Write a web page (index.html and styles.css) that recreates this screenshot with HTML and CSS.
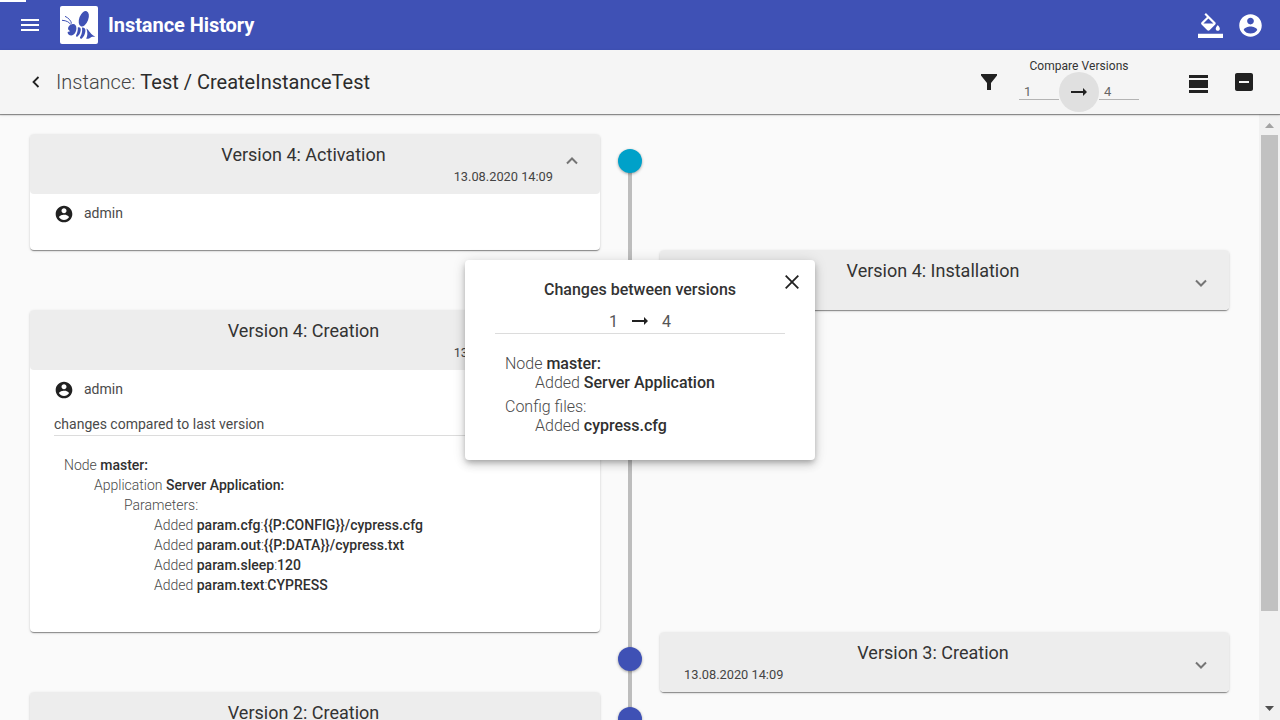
FILE: index.html
```html
<!DOCTYPE html>
<html lang="en">
<head>
<meta charset="utf-8">
<title>Instance History</title>
<link rel="stylesheet" href="styles.css">
</head>
<body>
<svg width="0" height="0" class="defs">
  <symbol id="account" viewBox="0 0 24 24"><path d="M12 2C6.480 2 2 6.480 2 12s4.480 10 10 10 10-4.480 10-10S17.520 2 12 2zm0 3c1.660 0 3 1.340 3 3s-1.340 3-3 3-3-1.340-3-3 1.340-3 3-3zm0 14.200c-2.500 0-4.710-1.280-6-3.220.030-1.990 4-3.080 6-3.080 1.990 0 5.970 1.090 6 3.080-1.290 1.940-3.500 3.220-6 3.220z"/></symbol>
  <symbol id="arrow" viewBox="0 0 24 24"><path d="M16.010 11H4v2h12.010v3L20 12l-3.990-4v3z"/></symbol>
  <symbol id="chevron" viewBox="0 0 16 10"><path d="M3 2.500l5 5 5-5" fill="none" stroke="#757575" stroke-width="2"/></symbol>
</svg>
<div class="app">
  <header class="topbar">
    <div class="progress"></div>
    <svg class="menu" viewBox="0 0 24 24"><path d="M3 18h18v-2H3v2zm0-5h18v-2H3v2zm0-7v2h18V6H3z"/></svg>
    <div class="logo">
      <svg viewBox="0 0 38 38">
        <ellipse cx="23.800" cy="12.700" rx="4.500" ry="8.100" transform="rotate(21 23.800 12.700)"/>
        <path d="M12 18.300c2.600-.8 4.500 1.200 4.400 4 0 3.600-2.200 7.300-5.200 7.200-2.200 0-3.600-1.500-3.600-3.500l2.500-.8-1.900-1.600c-.6-2.500 1.200-4.700 3.800-5.300z"/>
        <path d="M17.800 21.400c2.200-.4 3.300.8 2.900 3.200-.5 2.800-1.500 4.900-3.700 6.300-1.300-.4-1.100-1.600-.5-2.700 1-2.100 1.500-4.200 1.300-6.800z"/>
        <path d="M22 21.600c2.600-.1 3.700 1.200 3.400 3.700-.4 2.800-1.300 5.500-3.800 7.400-1.700.1-2.100-.9-1.200-2.200 1.600-2.500 2-5.400 1.600-8.900z"/>
        <path d="M26.400 22.600c3 1.900 4 6.200 8.900 8-2.400.4-3.700.2-4.600.8-1 .8-2 1.500-4.500 1.400 1.600-3 1.500-6.400.2-10.200z"/>
        <path d="M10.700 18.500C9.600 16.500 6.700 14.500 2 14.300M11.500 17.500C11 14.500 8.500 12 5 10.300" class="antenna"/>
      </svg>
    </div>
    <h1>Instance History</h1>
    <div class="top-actions">
      <svg class="fill" viewBox="0 0 24 24"><path d="M16.560 8.940L7.620 0 6.210 1.410l2.380 2.380-5.150 5.150c-.59.59-.59 1.540 0 2.120l5.500 5.500c.29.290.68.440 1.060.440s.77-.150 1.060-.440l5.500-5.500c.59-.58.59-1.530 0-2.120zM5.210 10L10 5.210 14.790 10H5.210zM19 11.500s-2 2.170-2 3.500c0 1.100.9 2 2 2s2-.9 2-2c0-1.330-2-3.500-2-3.500zM0 20h24v4H0z"/></svg>
      <svg class="user"><use href="#account"/></svg>
    </div>
  </header>
  <div class="toolbar">
    <svg class="back" viewBox="0 0 12 14"><path d="M8.500 2L3.500 7l5 5" fill="none" stroke="#212121" stroke-width="1.800"/></svg>
    <h2>Instance: <span>Test / CreateInstanceTest</span></h2>
    <svg class="filter" viewBox="0 0 16 16"><path d="M0 0h16v1.500L10 9v7H6V9L0 1.500z"/></svg>
    <div class="compare">
      <div class="compare-title">Compare Versions</div>
      <div class="compare-row">
        <div class="field">1</div>
        <div class="go"><svg><use href="#arrow"/></svg></div>
        <div class="field">4</div>
      </div>
    </div>
    <svg class="headline" viewBox="0 0 19 18"><path d="M0 0h19v3H0zM0 5h19v8H0zM0 15h19v3H0z"/></svg>
    <svg class="collapse" viewBox="0 0 18 18"><path d="M16 0H2C.9 0 0 .9 0 2v14c0 1.100.9 2 2 2h14c1.100 0 2-.9 2-2V2c0-1.100-.9-2-2-2zm-2 10H4V8h10v2z"/></svg>
  </div>
  <main class="content">
    <div class="timeline">
      <article class="card left r1">
        <div class="head"><div class="head-text"><h3>Version 4: Activation</h3><time>13.08.2020 14:09</time></div><svg class="chev up"><use href="#chevron"/></svg></div>
        <div class="body"><div class="person"><svg><use href="#account"/></svg><span>admin</span></div></div>
      </article>
      <article class="card right r2">
        <div class="head"><div class="head-text"><h3>Version 4: Installation</h3><time>13.08.2020 14:09</time></div><svg class="chev"><use href="#chevron"/></svg></div>
      </article>
      <article class="card left r3">
        <div class="head"><div class="head-text"><h3>Version 4: Creation</h3><time>13.08.2020 14:09</time></div><svg class="chev up"><use href="#chevron"/></svg></div>
        <div class="body">
          <div class="person"><svg><use href="#account"/></svg><span>admin</span></div>
          <div class="changes-title">changes compared to last version</div>
          <div class="changes">
            <div>Node <b>master:</b></div>
            <div class="in1">Application <b>Server Application:</b></div>
            <div class="in2">Parameters:</div>
            <div class="in3">Added <b>param.cfg</b>:<b>{{P:CONFIG}}/cypress.cfg</b></div>
            <div class="in3">Added <b>param.out</b>:<b>{{P:DATA}}/cypress.txt</b></div>
            <div class="in3">Added <b>param.sleep</b>:<b>120</b></div>
            <div class="in3">Added <b>param.text</b>:<b>CYPRESS</b></div>
          </div>
        </div>
      </article>
      <article class="card right r4">
        <div class="head"><div class="head-text"><h3>Version 3: Creation</h3><time>13.08.2020 14:09</time></div><svg class="chev"><use href="#chevron"/></svg></div>
      </article>
      <article class="card left r5">
        <div class="head"><div class="head-text"><h3>Version 2: Creation</h3></div></div>
      </article>
      <div class="line"></div>
      <div class="dot active r1"></div>
      <div class="dot r2"></div>
      <div class="dot r3"></div>
      <div class="dot r4"></div>
      <div class="dot r5"></div>
    </div>
    <div class="scrollbar">
      <svg viewBox="0 0 9 5"><path d="M0 5h9L4.500 0z" fill="#a3a3a3"/></svg>
      <div class="thumb"></div>
      <svg viewBox="0 0 9 5"><path d="M0 0h9L4.500 5z" fill="#505050"/></svg>
    </div>
  </main>
  <section class="dialog">
    <svg class="close" viewBox="0 0 14 14"><path d="M.7.7l12.600 12.600M13.300.7L.7 13.300" fill="none" stroke="#212121" stroke-width="1.800"/></svg>
    <h4>Changes between versions</h4>
    <div class="range"><span>1</span><svg><use href="#arrow"/></svg><span>4</span></div>
    <div class="diff">
      <div>Node <b>master:</b></div>
      <div class="in1">Added <b>Server Application</b></div>
      <div class="group">Config files:</div>
      <div class="in1">Added <b>cypress.cfg</b></div>
    </div>
  </section>
</div>
</body>
</html>
```
FILE: styles.css
```css
* { box-sizing: border-box; }
body { margin: 0; font-family: Roboto, sans-serif; color: #333; font-size: 14px; }
h1, h2, h3, h4 { margin: 0; font-weight: 400; }
b { font-weight: 500; color: #303030; }
svg { display: block; flex: none; fill: #212121; }
.defs { position: absolute; }
.app { position: relative; width: 1280px; height: 720px; overflow: hidden; display: flex; flex-direction: column; background: #fafafa; }

.topbar { position: relative; height: 50px; flex: none; display: flex; align-items: center; padding: 0 16.5px 0 18px; background: #3f51b5; color: #fff; }
.topbar > svg, .top-actions svg { fill: #fff; }
.progress { position: absolute; left: 0; top: 0; width: 26px; height: 2px; background: #fff; }
.menu { width: 24px; height: 24px; }
.logo { width: 38px; height: 38px; margin: 0 10px 0 18px; background: #fff; border-radius: 2px; }
.logo svg { width: 38px; height: 38px; fill: #3f51b5; }
.antenna { fill: none; stroke: #3f51b5; stroke-width: 1; }
.topbar h1 { font-size: 20px; font-weight: 700; line-height: 24px; letter-spacing: -.06px; }
.top-actions { margin-left: auto; display: flex; align-items: center; gap: 14px; }
.fill { width: 25px; height: 25px; }
.user { width: 27px; height: 27px; }

.toolbar { position: relative; z-index: 1; height: 64px; flex: none; display: flex; align-items: center; padding: 0 27px 0 30px; background: #f5f5f5; box-shadow: 0 1px 1px rgba(0,0,0,.4), 0 1px 3px rgba(0,0,0,.12); }
.back { width: 12px; height: 14px; }
.toolbar h2 { margin-left: 14px; font-size: 20px; font-weight: 300; line-height: 32px; color: #444; }
.toolbar h2 span { font-weight: 400; color: #2c2c2c; }
.filter { width: 16px; height: 16px; margin-left: auto; }
.compare { width: 120px; height: 64px; margin: 0 50px 0 22px; padding-top: 9px; }
.compare-title { font-size: 12px; line-height: 15px; text-align: center; letter-spacing: .05px; }
.compare-row { display: flex; }
.field { width: 40px; height: 26px; padding: 10px 0 0 5px; border-bottom: 1px solid #b4b4b4; font-size: 13px; line-height: 15px; color: #666; }
.go { width: 40px; height: 40px; margin-top: -2px; border-radius: 50%; background: #e0e0e0; display: flex; align-items: center; justify-content: center; }
.go svg { width: 24px; height: 24px; }
.headline { width: 19px; height: 18px; margin-top: 3px; }
.collapse { width: 18px; height: 18px; margin-left: 27px; }

.content { flex: 1; min-height: 0; display: flex; overflow: hidden; }
.timeline { width: 1259px; height: 638px; flex: none; padding: 20px 30px 0; display: grid; grid-template-columns: 570px 60px 569px; grid-template-rows: 116px 60px 322px 60px 60px; }
.r1 { grid-row: 1; } .r2 { grid-row: 2; } .r3 { grid-row: 3; } .r4 { grid-row: 4; } .r5 { grid-row: 5; }
.left { grid-column: 1; }
.right { grid-column: 3; }
.line { grid-column: 2; grid-row: 1 / -1; justify-self: center; width: 4px; margin-top: 27px; background: #bdbdbd; }
.dot { grid-column: 2; justify-self: center; width: 24px; height: 24px; margin-top: 15px; border-radius: 50%; background: #3f51b5; box-shadow: 0 1px 3px rgba(0,0,0,.35); }
.dot.active { background: #00a1c9; }
.card { border-radius: 4px; background: #fff; box-shadow: 0 2px 1px -1px rgba(0,0,0,.24), 0 1px 1px rgba(0,0,0,.2), 0 1px 3px rgba(0,0,0,.14); }
.head { height: 60px; padding: 0 24px; border-radius: 4px; background: #ededed; display: flex; }
.r5 .head { padding-right: 47px; }
.head-text { flex: 1; padding-top: 9px; }
.head h3 { text-align: center; font-size: 18px; line-height: 24px; }
time { display: block; font-size: 12.8px; line-height: 20px; text-align: right; color: #444; }
.right time { text-align: left; }
.chev { width: 16px; height: 10px; margin: 28px -4px 0 11px; }
.chev.up { transform: rotate(180deg); margin-top: 22px; }
.body { padding: 10px 24px 0; }
.person { display: flex; align-items: center; gap: 10px; height: 20px; color: #4a4a4a; }
.person svg { width: 20px; height: 20px; }
.person span { padding-bottom: 2px; }
.changes-title { margin-top: 14px; height: 22px; line-height: 20px; border-bottom: 1px solid #dcdcdc; color: #4a4a4a; }
.changes { padding: 19px 10px 0; line-height: 20px; font-weight: 300; color: #4a4a4a; }
.in1 { padding-left: 30px; }
.in2 { padding-left: 60px; }
.in3 { padding-left: 90px; }

.scrollbar { width: 21px; background: #f1f1f1; display: flex; flex-direction: column; align-items: center; justify-content: space-between; padding: 9px 0 9px; }
.scrollbar svg { width: 9px; height: 5px; }
.thumb { width: 17px; height: 476px; margin: 7px 0 auto; background: #c1c1c1; }

.dialog { position: absolute; z-index: 2; left: 465px; top: 260px; width: 350px; height: 200px; padding: 19px 30px; border-radius: 4px; background: #fff; box-shadow: 0 3px 5px -1px rgba(0,0,0,.2), 0 5px 10px rgba(0,0,0,.14), 0 1px 14px rgba(0,0,0,.12); font-size: 16px; }
.close { position: absolute; right: 16px; top: 15px; width: 14px; height: 14px; }
.dialog h4 { text-align: center; font-size: 16px; font-weight: 500; line-height: 22px; }
.range { margin-top: 8px; height: 25px; display: flex; justify-content: center; gap: 10px; border-bottom: 1px solid #dcdcdc; line-height: 26px; color: #555; }
.range svg { width: 24px; height: 24px; }
.diff { padding: 20px 10px 0; font-weight: 300; line-height: 19px; color: #4a4a4a; }
.group { margin-top: 5px; }
```
